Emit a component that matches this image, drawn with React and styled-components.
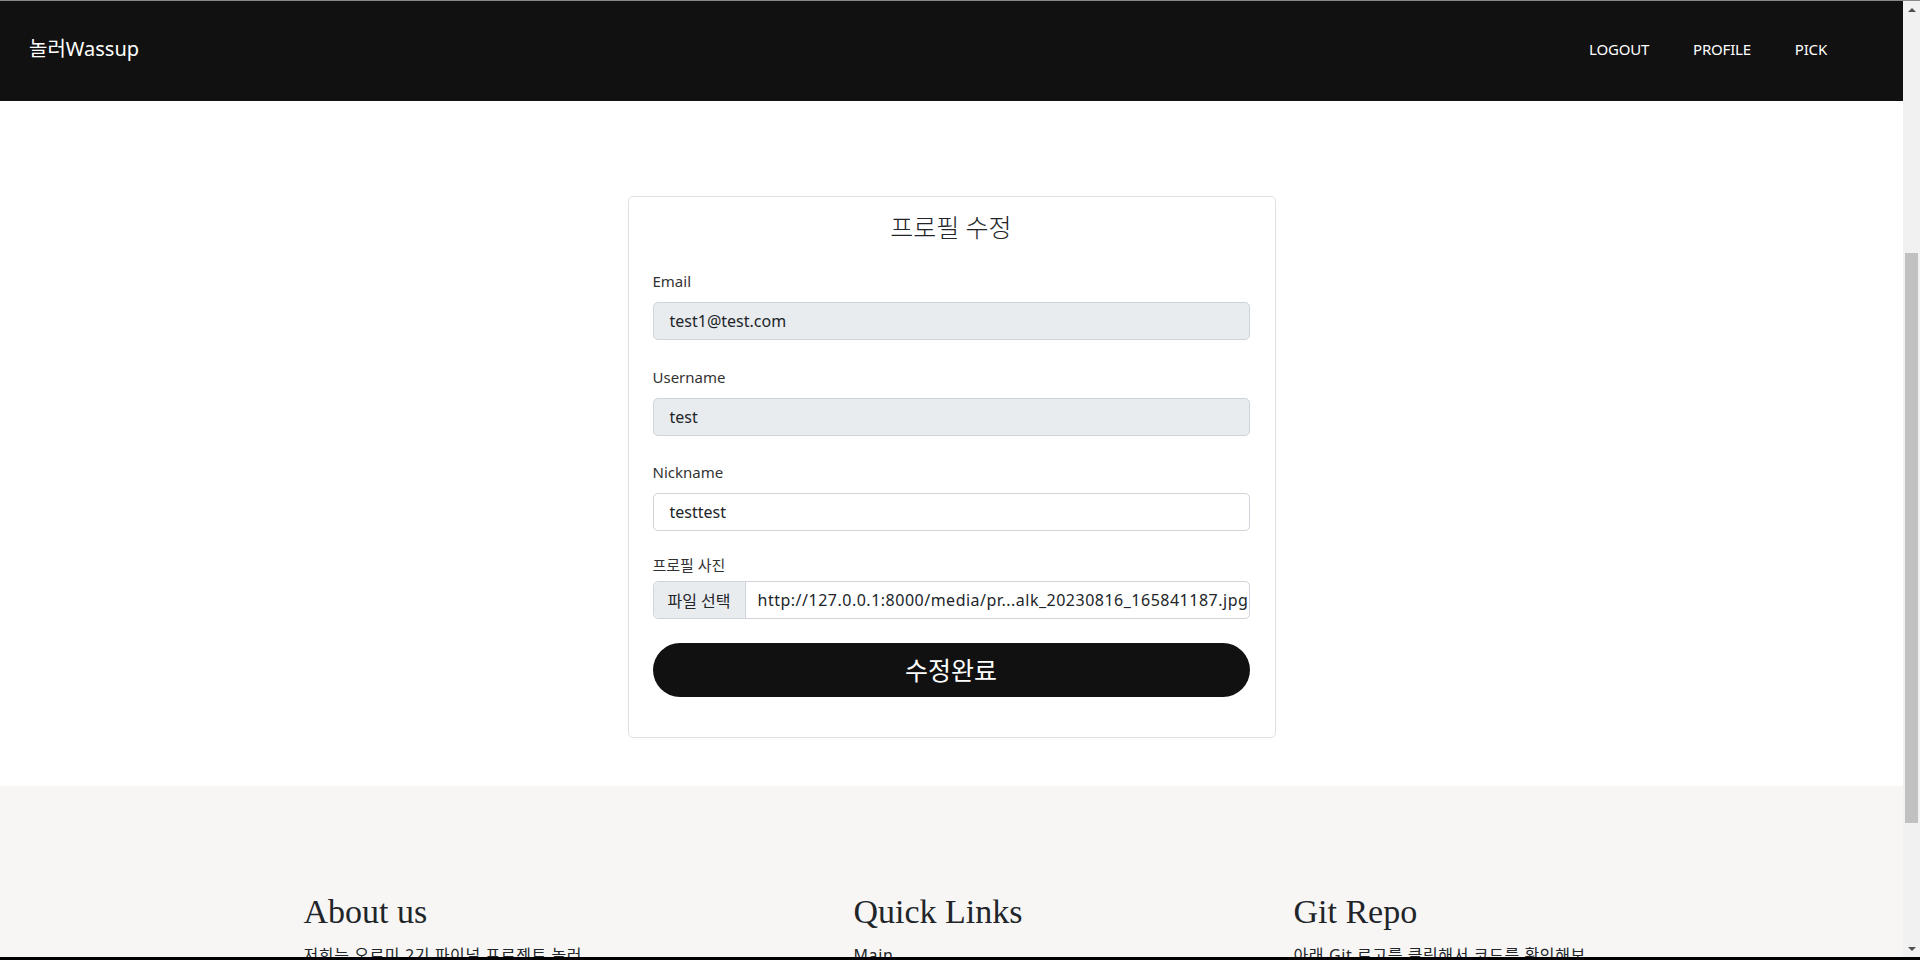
import React from "react";
import styled, { createGlobalStyle } from "styled-components";

const sans = `"Noto Sans", "Noto Sans CJK KR", sans-serif`;
const serif = `"Liberation Serif", "Noto Sans CJK KR", serif`;

const fields = [
  { label: "Email", value: "test1@test.com", disabled: true },
  { label: "Username", value: "test", disabled: true },
  { label: "Nickname", value: "testtest", disabled: false },
];

export default function App() {
  return (
    <Frame>
      <GlobalStyle />
      <Viewport>
        <Navbar>
          <Brand>놀러Wassup</Brand>
          <NavList>
            <NavLink>LOGOUT</NavLink>
            <NavLink>PROFILE</NavLink>
            <NavLink>PICK</NavLink>
          </NavList>
        </Navbar>

        <Main>
          <Card>
            <CardTitle>프로필 수정</CardTitle>
            {fields.map((f, i) => (
              <Field key={f.label} $last={i === fields.length - 1}>
                <Label>{f.label}</Label>
                <Input $disabled={f.disabled}>{f.value}</Input>
              </Field>
            ))}
            <Field $file>
              <Label $tight>프로필 사진</Label>
              <FileInput>
                <FileButton>파일 선택</FileButton>
                <FileName>
                  http://127.0.0.1:8000/media/pr...alk_20230816_165841187.jpg
                </FileName>
              </FileInput>
            </Field>
            <Submit>수정완료</Submit>
          </Card>
        </Main>

        <Footer>
          <FooterRow>
            <FooterCol $span={5}>
              <FooterTitle>About us</FooterTitle>
              <FooterText>
                저희는 오르미 2기 파이널 프로젝트 놀러
                <br />
                Wassup 팀입니다.
              </FooterText>
            </FooterCol>
            <FooterCol $span={4}>
              <FooterTitle>Quick Links</FooterTitle>
              <FooterText>Main</FooterText>
            </FooterCol>
            <FooterCol $span={3}>
              <FooterTitle>Git Repo</FooterTitle>
              <FooterText>아래 Git 로고를 클릭해서 코드를 확인해보세요</FooterText>
            </FooterCol>
          </FooterRow>
        </Footer>
      </Viewport>

      <Scrollbar>
        <Arrow />
        <Track>
          <Thumb />
        </Track>
        <Arrow $down />
      </Scrollbar>
    </Frame>
  );
}

//styles
const GlobalStyle = createGlobalStyle`
  * { box-sizing: border-box; }
  body {
    margin: 0;
    overflow: hidden;
    font-family: ${sans};
    color: #212529;
  }
`;
const Frame = styled.div`
  height: 960px;
  display: flex;
  border-top: 1px solid #8a888a;
  border-bottom: 3px solid #000;
  overflow: hidden;
`;
const Viewport = styled.div`
  flex: 1;
  display: flex;
  flex-direction: column;
  overflow: hidden;
`;
const Navbar = styled.nav`
  height: 100px;
  flex-shrink: 0;
  background: #111;
  display: flex;
  align-items: center;
  justify-content: space-between;
  padding: 0 76px 4px 29px;
`;
const Brand = styled.div`
  color: #fff;
  font-size: 20px;
  margin-top: -3px;
`;
const NavList = styled.div`
  display: flex;
  gap: 44px;
`;
const NavLink = styled.a`
  color: #fff;
  font-size: 15px;
  letter-spacing: -0.2px;
`;
const Main = styled.main`
  flex-shrink: 0;
  background: #fff;
  display: flex;
  justify-content: center;
  padding: 95px 0 48px;
`;
const Card = styled.section`
  width: 648px;
  border: 1px solid #dee2e6;
  border-radius: 5px;
  padding: 17px 25px 40px 24px;
`;
const CardTitle = styled.h2`
  margin: 0 0 28px;
  text-align: center;
  font-family: ${serif};
  font-weight: 300;
  font-size: 25px;
  line-height: 29px;
  color: #212529;
`;
const Field = styled.div`
  margin-bottom: ${({ $file, $last }) => ($file ? "24px" : $last ? "24px" : "26.5px")};
`;
const Label = styled.div`
  font-size: 15px;
  line-height: 21px;
  color: #333;
  margin-bottom: ${({ $tight }) => ($tight ? "5px" : "10px")};
`;
const Input = styled.div`
  height: 38px;
  display: flex;
  align-items: center;
  padding: 0 16px;
  font-size: 16px;
  color: #212529;
  background: ${({ $disabled }) => ($disabled ? "#e9ecef" : "#fff")};
  border: 1px solid #ced4da;
  border-radius: 5px;
`;
const FileInput = styled.div`
  height: 38px;
  display: flex;
  border: 1px solid #ced4da;
  border-radius: 5px;
  overflow: hidden;
`;
const FileButton = styled.div`
  display: flex;
  align-items: center;
  padding: 0 14px;
  background: #e9ecef;
  border-right: 1px solid #ced4da;
  font-size: 16px;
  color: #212529;
  white-space: nowrap;
`;
const FileName = styled.div`
  flex: 1;
  display: flex;
  align-items: center;
  padding: 0 12px;
  font-size: 16px;
  letter-spacing: 0.5px;
  color: #212529;
  white-space: nowrap;
  overflow: hidden;
`;
const Submit = styled.button`
  width: 100%;
  height: 54px;
  border: none;
  border-radius: 27px;
  background: #111;
  color: #fff;
  font-family: ${sans};
  font-size: 25px;
  font-weight: 400;
  padding: 0 0 2px;
`;
const Footer = styled.footer`
  flex: 1;
  background: #f7f6f4;
  padding-top: 107px;
  display: flex;
  justify-content: center;
`;
const FooterRow = styled.div`
  width: 1320px;
  display: grid;
  grid-template-columns: repeat(12, 1fr);
  align-items: start;
`;
const FooterCol = styled.div`
  grid-column: span ${({ $span }) => $span};
  padding: 0 12px;
`;
const FooterTitle = styled.h3`
  margin: 0 0 13px;
  font-family: ${serif};
  font-weight: 400;
  font-size: 34px;
  line-height: 38px;
  color: #212529;
`;
const FooterText = styled.p`
  margin: 0;
  font-size: 16px;
  letter-spacing: 0.6px;
  line-height: 23px;
  color: #212529;
`;
const Scrollbar = styled.div`
  width: 17px;
  flex-shrink: 0;
  background: #f1f1f1;
  display: flex;
  flex-direction: column;
  align-items: center;
`;
const Arrow = styled.div`
  height: 17px;
  width: 17px;
  display: flex;
  align-items: center;
  justify-content: center;
  &::before {
    content: "";
    border-left: 4px solid transparent;
    border-right: 4px solid transparent;
    ${({ $down }) =>
      $down ? "border-top: 4px solid #505050;" : "border-bottom: 4px solid #505050;"}
  }
`;
const Track = styled.div`
  flex: 1;
  width: 100%;
  padding: 235px 2px 0;
`;
const Thumb = styled.div`
  height: 570px;
  background: #c1c1c1;
`;
